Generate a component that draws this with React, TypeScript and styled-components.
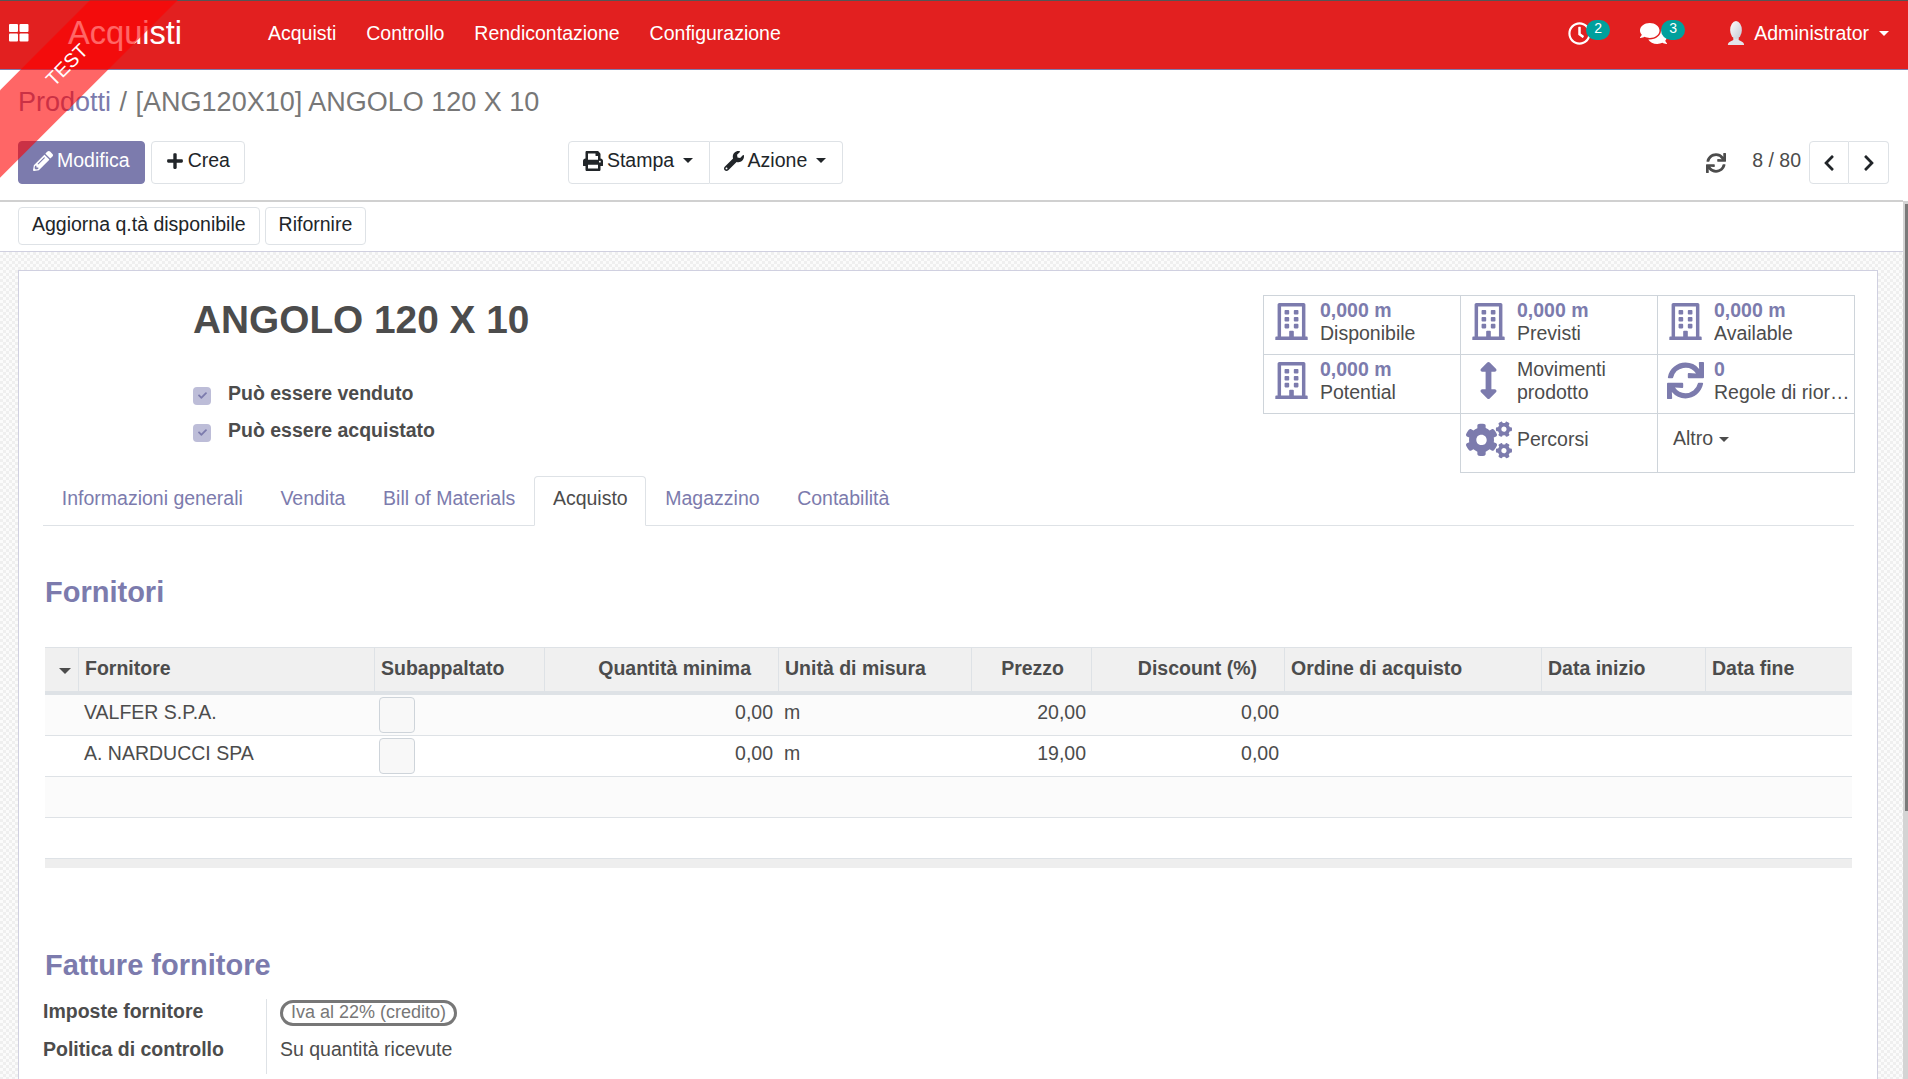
import type { JSX } from 'react';
import styled, { createGlobalStyle } from 'styled-components';
import {
  FaPencilAlt, FaPlus, FaPrint, FaWrench, FaSync, FaChevronLeft, FaChevronRight,
  FaRegClock, FaComments, FaRegBuilding, FaArrowsAltV, FaCogs, FaCheck,
} from 'react-icons/fa';

const Global = createGlobalStyle`
  html, body { margin: 0; padding: 0; height: 100%; overflow: hidden; }
  body { font-family: "Liberation Sans", Arial, sans-serif; font-size: 19.5px; color: #4c4c4c; background: #fff; }
  * { box-sizing: border-box; }
`

const Page = styled.div`
  position: relative;
  height: 1079px;
  overflow: hidden;
  display: flex;
  flex-direction: column;
`

const Ribbon = styled.div`
  position: absolute;
  left: -82px;
  top: 35px;
  width: 300px;
  height: 62px;
  line-height: 58px;
  text-align: center;
  transform: rotate(-45deg);
  background: rgba(255, 0, 0, 0.6);
  color: #fff;
  pointer-events: none;
  z-index: 5;
`

const Navbar = styled.header`
  height: 70px;
  flex: none;
  padding-bottom: 4px;
  background: #e22020;
  border-top: 1px solid #555;
  border-bottom: 1px solid #7c7bad;
  display: flex;
  align-items: center;
  color: #fff;
`

const Apps = styled.div`
  width: 68px;
  padding-left: 9px;
  display: flex;
`

const Brand = styled.div`
  width: 200px;
  font-size: 32.6px;
`

const NavLink = styled.a`
  margin-right: 30px;
`

const NavRight = styled.div`
  margin-left: auto;
  padding-right: 19px;
  display: flex;
  align-items: center;
`

const Systray = styled.div<{ $width: number; $size: number }>`
  position: relative;
  width: ${(p) => p.$width}px;
  height: 30px;
  display: flex;
  align-items: center;
  font-size: ${(p) => p.$size}px;
`

const Badge = styled.span<{ $left: number }>`
  position: absolute;
  left: ${(p) => p.$left}px;
  top: 2px;
  width: 24px;
  height: 20px;
  border-radius: 10px;
  background: #00a09d;
  font-size: 14px;
  line-height: 17px;
  text-align: center;
`

const UserName = styled.span`
  margin: 0 10px 0 9px;
`

const Caret = styled.span<{ $gap?: number; $size?: number }>`
  display: inline-block;
  width: 0;
  height: 0;
  vertical-align: middle;
  border-left: ${(p) => p.$size ?? 5}px solid transparent;
  border-right: ${(p) => p.$size ?? 5}px solid transparent;
  border-top: ${(p) => p.$size ?? 5}px solid currentColor;
  margin-left: ${(p) => p.$gap ?? 0}px;
`

const ControlPanel = styled.section`
  flex: none;
  height: 132px;
  margin-right: 5px;
  padding: 0 14px 0 18px;
  border-bottom: 2px solid #d0d0d0;
`

const Breadcrumb = styled.div`
  height: 71px;
  padding-top: 14px;
  font-size: 27px;
  line-height: 36px;
  color: #777;
  a { color: #7c7bad; }
`

const CrumbSep = styled.span`
  margin: 0 1px;
`

const CpRow = styled.div`
  display: flex;
  align-items: center;
`

const Btn = styled.button<{ $primary?: boolean; $small?: boolean }>`
  height: ${(p) => (p.$small ? 38 : 43)}px;
  padding: 0 ${(p) => (p.$small ? 13 : 14)}px 4px;
  margin-right: ${(p) => (p.$small ? 5 : 6)}px;
  font: inherit;
  color: ${(p) => (p.$primary ? '#fff' : '#212529')};
  background: ${(p) => (p.$primary ? '#7c7bad' : '#fff')};
  border: 1px solid ${(p) => (p.$primary ? '#7c7bad' : '#dee2e6')};
  border-radius: 4px;
  display: inline-flex;
  align-items: center;
  gap: 4px;
  white-space: nowrap;
`

const Group = styled.div`
  display: flex;
  margin-left: 317px;
  button { border-radius: 0; margin: 0; padding-right: 15.5px; }
  button:first-child { border-radius: 4px 0 0 4px; }
  button:last-child { border-radius: 0 4px 4px 0; border-left: 0; }
`

const Pager = styled.div`
  margin-left: auto;
  display: flex;
  align-items: center;
  color: #4c4c4c;
`

const PagerText = styled.span`
  margin: -4px 8px 0 26px;
`

const PagerBtn = styled.button`
  width: 40px;
  height: 43px;
  padding: 0;
  background: #fff;
  color: #212529;
  border: 1px solid #dee2e6;
  display: flex;
  align-items: center;
  justify-content: center;
  &:first-of-type { border-radius: 4px 0 0 4px; }
  &:last-of-type { border-radius: 0 4px 4px 0; border-left: 0; }
`

const StatusBar = styled.div`
  flex: none;
  height: 50px;
  margin-right: 5px;
  padding: 5px 18px 0;
  display: flex;
  align-items: flex-start;
  background: #fff;
  border-bottom: 1px solid #d0d0e0;
`

const Content = styled.main`
  flex: 1;
  min-height: 0;
  margin-right: 5px;
  padding: 18px 25px 0 18px;
  background-color: #f9f9f9;
  background-image: repeating-conic-gradient(#efefef 0 25%, #fbfbfb 0 50%);
  background-size: 6px 6px;
  overflow: hidden;
`

const Sheet = styled.div`
  height: 900px;
  background: #fff;
  border: 1px solid #d0d0e0;
  padding: 24px 23px 0 24px;
`

const Header = styled.div`
  display: flex;
  justify-content: space-between;
  height: 181px;
`

const TitleBlock = styled.div`
  padding: 0 0 0 150px;
`

const Title = styled.h1`
  margin: 3px 0 0;
  font-size: 38.8px;
  line-height: 44px;
  font-weight: 700;
  color: #4c4c4c;
`

const Options = styled.div`
  margin-top: 40px;
  display: flex;
  flex-direction: column;
  gap: 14px;
`

const Option = styled.label`
  display: flex;
  align-items: center;
  gap: 17px;
  font-weight: 700;
  height: 23px;
`

const Check = styled.span`
  width: 18px;
  height: 18px;
  margin-top: 4px;
  background: #bdbdd8;
  border-radius: 4px;
  color: #7c7bad;
  font-size: 9px;
  display: flex;
  align-items: center;
  justify-content: center;
`

const StatGrid = styled.div`
  display: grid;
  grid-template-columns: repeat(3, 197px);
  grid-auto-rows: 59px;
  width: 590px;
  height: 177px;
  padding-top: 1px;
`

const Stat = styled.div<{ $col?: number }>`
  ${(p) => (p.$col ? `grid-column: ${p.$col};` : '')}
  display: flex;
  align-items: center;
  gap: 6px;
  margin: -1px 0 0 -1px;
  padding: 0 3px 7px 5px;
  border: 1px solid #ced4da;
  line-height: 23px;
  white-space: nowrap;
  overflow: hidden;
`

const StatIcon = styled.span`
  width: 45px;
  flex: none;
  color: #7c7bad;
  font-size: 37px;
  display: flex;
  justify-content: center;
  svg { flex: none; }
`

const StatText = styled.div`
  flex: 1;
  min-width: 0;
`

const StatValue = styled.div`
  color: #7c7bad;
  font-weight: 700;
`

const StatLabel = styled.div`
  overflow: hidden;
  text-overflow: ellipsis;
`

const More = styled.span`
  padding-left: 10px;
  margin-top: -2px;
`

const Tabs = styled.nav`
  display: flex;
  height: 50px;
  border-bottom: 1px solid #dee2e6;
`

const Tab = styled.a<{ $active?: boolean }>`
  height: 50px;
  padding: 0 17.8px;
  line-height: 42px;
  color: ${(p) => (p.$active ? '#4c4c4c' : '#7c7bad')};
  background: #fff;
  ${(p) => (p.$active
    ? 'border: 1px solid #dee2e6; border-bottom-color: #fff; border-radius: 4px 4px 0 0;'
    : 'border: 1px solid transparent; background: transparent;')}
`

const Heading = styled.h2`
  margin: 0;
  font-size: 29px;
  line-height: 36px;
  font-weight: 700;
  color: #7c7bad;
`

const FornitoriHeading = styled(Heading)`
  margin: 48px 0 37px 2px;
`

const Table = styled.table`
  width: 1807px;
  margin-left: 2px;
  table-layout: fixed;
  border-collapse: separate;
  border-spacing: 0;
`

const Th = styled.th<{ $right?: boolean }>`
  height: 48px;
  padding: 0 5px 3px 6px;
  padding-right: ${(p) => (p.$right ? 27 : 5)}px;
  text-align: ${(p) => (p.$right ? 'right' : 'left')};
  font-weight: 700;
  background: #f0f0f0;
  border-top: 1px solid #dee2e6;
  border-left: 1px solid #dee2e6;
  border-bottom: 4px solid #dee2e6;
  &:first-child { border-left: 0; text-align: center; padding: 0; }
  color: #4c4c4c;
`

const Row = styled.tr<{ $odd?: boolean }>`
  background: ${(p) => (p.$odd ? '#fbfbfb' : '#fff')};
`

const Td = styled.td<{ $right?: boolean }>`
  height: 41px;
  padding: 5px 5px 0 6px;
  text-align: ${(p) => (p.$right ? 'right' : 'left')};
  border-bottom: 1px solid #dee2e6;
  vertical-align: top;
  line-height: 24px;
`

const EmptyBox = styled.div`
  width: 36px;
  height: 36px;
  margin: -3px 0 0 -1px;
  background: #f8f8f8;
  border: 1px solid #ced4da;
  border-radius: 4px;
`

const Foot = styled.div`
  width: 1807px;
  margin-left: 2px;
  margin-top: 40px;
  height: 10px;
  background: #eee;
  border-top: 1px solid #dee2e6;
`

const InvoiceHeading = styled(Heading)`
  margin: 79px 0 16px 2px;
`

const Fields = styled.div`
  display: grid;
  grid-template-columns: 224px auto;
  width: 600px;
`

const FieldLabel = styled.div`
  height: 37.5px;
  font-weight: 700;
  line-height: 24px;
  border-right: 1px solid #dee2e6;
`

const FieldValue = styled.div`
  height: 37.5px;
  padding-left: 13px;
  line-height: 24px;
`

const Tag = styled.span`
  display: inline-block;
  height: 26px;
  padding: 0 8px;
  margin-top: 1px;
  border: 3px solid #777;
  border-radius: 13px;
  font-size: 18px;
  line-height: 18px;
  color: #777;
`

const ScrollTrack = styled.div`
  position: absolute;
  right: 0;
  top: 201px;
  bottom: 0;
  width: 5px;
  padding: 3px 0 0 2px;
  background: #d4d4d4;
`

const ScrollThumb = styled.div`
  height: 607px;
  background: #7a7a7a;
`

const Stats: { value?: string; label: string; second?: string; icon: JSX.Element }[] = [
  { value: '0,000 m', label: 'Disponibile', icon: <FaRegBuilding /> },
  { value: '0,000 m', label: 'Previsti', icon: <FaRegBuilding /> },
  { value: '0,000 m', label: 'Available', icon: <FaRegBuilding /> },
  { value: '0,000 m', label: 'Potential', icon: <FaRegBuilding /> },
  { label: 'Movimenti', second: 'prodotto', icon: <FaArrowsAltV /> },
  { value: '0', label: 'Regole di riordino', icon: <FaSync /> },
]

const Columns = [
  { label: '', width: 33 },
  { label: 'Fornitore', width: 296 },
  { label: 'Subappaltato', width: 170 },
  { label: 'Quantità minima', width: 234, right: true },
  { label: 'Unità di misura', width: 193 },
  { label: 'Prezzo', width: 120, right: true },
  { label: 'Discount (%)', width: 193, right: true },
  { label: 'Ordine di acquisto', width: 257 },
  { label: 'Data inizio', width: 164 },
  { label: 'Data fine', width: 147 },
]

const Suppliers = [
  { name: 'VALFER S.P.A.', qty: '0,00', uom: 'm', price: '20,00', discount: '0,00' },
  { name: 'A. NARDUCCI SPA', qty: '0,00', uom: 'm', price: '19,00', discount: '0,00' },
]

function AppsIcon() {
  return (
    <svg width="20" height="18" viewBox="0 0 20 18" fill="#fff">
      <rect x="0" y="0" width="9" height="8" rx="1" />
      <rect x="10.5" y="0" width="9" height="8" rx="1" />
      <rect x="0" y="9.5" width="9" height="8" rx="1" />
      <rect x="10.5" y="9.5" width="9" height="8" rx="1" />
    </svg>
  )
}

function Avatar() {
  return (
    <svg width="18" height="24" viewBox="0 0 20 24" preserveAspectRatio="none">
      <defs>
        <linearGradient id="face" x1="0" y1="0" x2="1" y2="1">
          <stop offset="0" stopColor="#fff" />
          <stop offset="1" stopColor="#c4c8d4" />
        </linearGradient>
      </defs>
      <path d="M1 24c0-3 3-3.5 6-5v-2h6v2c3 1.500 6 2 6 5z" fill="#e2e4ea" />
      <ellipse cx="10" cy="9" rx="6.500" ry="9" fill="url(#face)" />
    </svg>
  )
}

export default function App() {
  return (
    <Page>
      <Global />
      <Ribbon>TEST</Ribbon>
      <Navbar>
        <Apps><AppsIcon /></Apps>
        <Brand>Acquisti</Brand>
        <NavLink>Acquisti</NavLink>
        <NavLink>Controllo</NavLink>
        <NavLink>Rendicontazione</NavLink>
        <NavLink>Configurazione</NavLink>
        <NavRight>
          <Systray $width={72} $size={23}><FaRegClock /><Badge $left={18}>2</Badge></Systray>
          <Systray $width={87} $size={27}><FaComments /><Badge $left={21}>3</Badge></Systray>
          <Avatar />
          <UserName>Administrator</UserName>
          <Caret />
        </NavRight>
      </Navbar>
      <ControlPanel>
        <Breadcrumb><a>Prodotti</a> <CrumbSep>/</CrumbSep> [ANG120X10] ANGOLO 120 X 10</Breadcrumb>
        <CpRow>
          <Btn $primary><FaPencilAlt size={20} />Modifica</Btn>
          <Btn><FaPlus size={18} />Crea</Btn>
          <Group>
            <Btn><FaPrint size={20} />Stampa<Caret $gap={5} /></Btn>
            <Btn><FaWrench size={20} />Azione<Caret $gap={5} /></Btn>
          </Group>
          <Pager>
            <FaSync size={20} />
            <PagerText>8 / 80</PagerText>
            <PagerBtn><FaChevronLeft size={18} /></PagerBtn>
            <PagerBtn><FaChevronRight size={18} /></PagerBtn>
          </Pager>
        </CpRow>
      </ControlPanel>
      <StatusBar>
        <Btn $small>Aggiorna q.tà disponibile</Btn>
        <Btn $small>Rifornire</Btn>
      </StatusBar>
      <Content>
        <Sheet>
          <Header>
            <TitleBlock>
              <Title>ANGOLO 120 X 10</Title>
              <Options>
                <Option><Check><FaCheck /></Check>Può essere venduto</Option>
                <Option><Check><FaCheck /></Check>Può essere acquistato</Option>
              </Options>
            </TitleBlock>
            <StatGrid>
              {Stats.map((s) => (
                <Stat key={s.label}>
                  <StatIcon>{s.icon}</StatIcon>
                  <StatText>
                    {s.value && <StatValue>{s.value}</StatValue>}
                    <StatLabel>{s.label}</StatLabel>
                    {s.second && <StatLabel>{s.second}</StatLabel>}
                  </StatText>
                </Stat>
              ))}
              <Stat $col={2}>
                <StatIcon><FaCogs size={46} /></StatIcon>
                <StatText>Percorsi</StatText>
              </Stat>
              <Stat $col={3}>
                <More>Altro <Caret $size={5} /></More>
              </Stat>
            </StatGrid>
          </Header>
          <Tabs>
            <Tab>Informazioni generali</Tab>
            <Tab>Vendita</Tab>
            <Tab>Bill of Materials</Tab>
            <Tab $active>Acquisto</Tab>
            <Tab>Magazzino</Tab>
            <Tab>Contabilità</Tab>
          </Tabs>
          <FornitoriHeading>Fornitori</FornitoriHeading>
          <Table>
            <colgroup>
              {Columns.map((c) => <col key={c.label} style={{ width: c.width }} />)}
            </colgroup>
            <thead>
              <tr>
                {Columns.map((c, i) => (
                  <Th key={c.label} $right={c.right}>{i === 0 ? <Caret $size={6} $gap={7} /> : c.label}</Th>
                ))}
              </tr>
            </thead>
            <tbody>
              {Suppliers.map((s, i) => (
                <Row key={s.name} $odd={i === 0}>
                  <Td />
                  <Td>{s.name}</Td>
                  <Td><EmptyBox /></Td>
                  <Td $right>{s.qty}</Td>
                  <Td>{s.uom}</Td>
                  <Td $right>{s.price}</Td>
                  <Td $right>{s.discount}</Td>
                  <Td />
                  <Td />
                  <Td />
                </Row>
              ))}
              <Row $odd>
                <Td colSpan={10} />
              </Row>
            </tbody>
          </Table>
          <Foot />
          <InvoiceHeading>Fatture fornitore</InvoiceHeading>
          <Fields>
            <FieldLabel>Imposte fornitore</FieldLabel>
            <FieldValue><Tag>Iva al 22% (credito)</Tag></FieldValue>
            <FieldLabel>Politica di controllo</FieldLabel>
            <FieldValue>Su quantità ricevute</FieldValue>
          </Fields>
        </Sheet>
      </Content>
      <ScrollTrack><ScrollThumb /></ScrollTrack>
    </Page>
  )
}
